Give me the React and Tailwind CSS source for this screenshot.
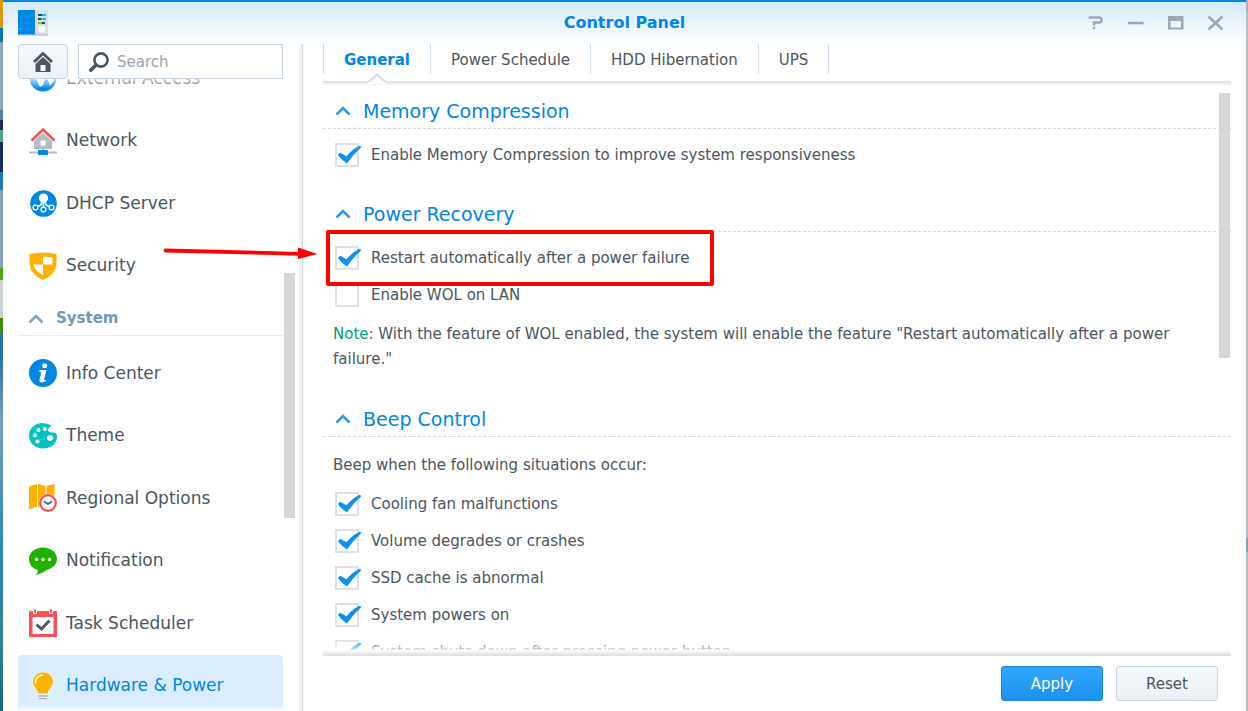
import React, { useState } from 'react';

const ExternalAccessIcon = () => (
  <svg viewBox="0 0 28 28" className="size-7">
    <circle cx="14" cy="14" r="13.500" fill="#0086e5" />
    <path d="M3 13 L8 16 L11 23 L14 21 L16 15 L19 16 L21 22 L25 16 L24 10 L15 8 L8 8 Z" fill="#fff" />
  </svg>
);

const NetworkIcon = () => (
  <svg viewBox="0 0 28 28" className="size-7">
    <path d="M5 14 L14 6 L23 14 V22 H5 Z" fill="#b3bec9" />
    <rect x="11.5" y="13.5" width="5" height="5" fill="#fff" />
    <path d="M2.5 13.5 L14 2.500 L25.5 13.5" fill="none" stroke="#fb5057" strokeWidth="2.6" />
    <path d="M0 25.5 H28 M14 22 V24" stroke="#b3bec9" strokeWidth="2" />
    <rect x="9" y="23" width="10" height="5" rx="1" fill="#0086e5" />
  </svg>
);

const DhcpIcon = () => (
  <svg viewBox="0 0 28 28" className="size-7">
    <circle cx="14.500" cy="14.500" r="13.300" fill="#0086e5" />
    <circle cx="14.500" cy="9" r="4.600" fill="#fff" />
    <path d="M14.500 12 V19 M13 12 L12 16 L7.500 18 M16 12 L17 16 L21.500 18" fill="none" stroke="#fff" strokeWidth="1.600" />
    <g fill="#0086e5" stroke="#fff" strokeWidth="1.400">
      <circle cx="6.500" cy="18.500" r="2.400" />
      <circle cx="14.500" cy="20.500" r="2.400" />
      <circle cx="22.500" cy="18.500" r="2.400" />
    </g>
  </svg>
);

const SecurityIcon = () => (
  <svg viewBox="0 0 28 28" className="size-7">
    <path d="M0.500 2 Q14 -1 27.500 2 V12 Q27 22 14 28 Q1 22 0.500 12 Z" fill="#ffb100" />
    <path d="M14 5 Q19 4.500 23.500 5.500 V12.500 H14 Z M4.500 12.500 H14 V23 Q5.500 19 4.500 12.500 Z" fill="#fff" />
  </svg>
);

const InfoIcon = () => (
  <svg viewBox="0 0 28 28" className="size-7">
    <circle cx="14" cy="14" r="14" fill="#0086e5" />
    <circle cx="15.700" cy="6.700" r="2.500" fill="#fff" />
    <path d="M10.500 11 H17.500 L15 20.500 Q15 21.500 17 20.500 L16.500 22.300 Q10 25.500 10.500 20.500 L12.300 13.200 L10.300 12.700 Z" fill="#fff" />
  </svg>
);

const ThemeIcon = () => (
  <svg viewBox="0 0 28 28" className="size-7">
    <path
      d="M22 3.500 Q18.500 1 13.500 1 C5.500 1 0 7 0 13.500 C0 21 6 26.500 14 26.500 C22.500 26.500 28 21 28 15 C28 11.500 26.500 10.500 24 10.500 C21 10.500 19 10 19 8 C19 6 21 6 22 3.500 Z"
      fill="#00c4c4"
    />
    <g fill="#fff">
      <circle cx="9.500" cy="8" r="2" />
      <circle cx="15.800" cy="7" r="2" />
      <circle cx="6" cy="13.300" r="2" />
      <circle cx="8.500" cy="19.500" r="2" />
      <ellipse cx="21" cy="16" rx="3.200" ry="2.700" />
    </g>
  </svg>
);

const RegionalIcon = () => (
  <svg viewBox="0 0 28 28" className="size-7">
    <path d="M0 2.500 L8 0 V22.500 L0 25.500 Z M9 0 L16.500 2 V25 L9 23 Z M17.500 2 L25.500 0 V16 H17.500 Z" fill="#ffb100" />
    <circle cx="19" cy="19" r="9.300" fill="#fff" />
    <circle cx="19" cy="19" r="7.800" fill="#fff" stroke="#fb5057" strokeWidth="2.200" />
    <path d="M15 17.500 L19 20 L23 17.500" fill="none" stroke="#4b5a68" strokeWidth="1.700" />
  </svg>
);

const NotificationIcon = () => (
  <svg viewBox="0 0 28 28" className="size-7">
    <path d="M14 0.500 C22 0.500 28 5.500 28 12 C28 18 23 21 18 23 C15 24.500 12 27 6.500 28 Q9 26 9 23 C3 21.500 0 17.500 0 12 C0 5.500 6 0.500 14 0.500 Z" fill="#1fb400" />
    <g fill="#fff">
      <circle cx="7.500" cy="12.500" r="1.700" />
      <circle cx="14" cy="12.500" r="1.700" />
      <circle cx="20.500" cy="12.500" r="1.700" />
    </g>
  </svg>
);

const TaskIcon = () => (
  <svg viewBox="0 0 28 28" className="size-7">
    <path d="M0 2 H4 V5 H8 V2 H20 V5 H24 V2 H28 V28 H0 Z" fill="#fb5057" />
    <path d="M5.200 0 H7 V4 H5.200 Z M21 0 H22.800 V4 H21 Z" fill="#fb5057" />
    <rect x="3.500" y="8" width="21" height="17" fill="#fff" />
    <path d="M7.500 15.500 L12.500 20 L20.500 11.500" fill="none" stroke="#4b5a68" strokeWidth="3" />
  </svg>
);

const PowerIcon = () => (
  <svg viewBox="0 0 28 28" className="size-7">
    <path d="M14 0 C20 0 24.500 4.500 24.500 10 C24.500 15 19.500 17 19 22 H9 C8.500 17 3.500 15 3.500 10 C3.500 4.500 8 0 14 0 Z" fill="#ffb100" stroke="#fff" strokeWidth="0.800" />
    <path d="M6.500 11 Q6.500 4 13.500 3" fill="none" stroke="#fff" strokeWidth="1.600" strokeLinecap="round" />
    <path d="M9 23 H19 V25 L17 28 H11 L9 25 Z" fill="#fff" />
    <path d="M9 24 H19 M10 26.500 H18" stroke="#a3b0bc" strokeWidth="1.300" />
  </svg>
);

const AppIcon = () => (
  <svg viewBox="0 0 30 26" className="h-[26px] w-[30px]">
    <rect x="16" y="0.500" width="14" height="24.500" fill="#d7dee5" />
    <path d="M0 25 H30" stroke="#a9b3bd" />
    <rect x="0" y="0" width="17" height="24.500" fill="#0086e5" />
    <path d="M2 7 H3 M5 7 H13 M2 13 H3 M5 13 H13 M5 19 H13" stroke="#12a4f0" strokeWidth="0.800" />
    <circle cx="2.500" cy="19" r="1.300" fill="#12b4f5" />
    <path d="M20 5 H24 M20 9 H27 M24 13 H27" stroke="#39434d" strokeWidth="2" />
    <path d="M24 5 H28 M23 9 H28" stroke="#18b8ef" strokeWidth="2" />
    <path d="M20 13 H24" stroke="#6fdc00" strokeWidth="2" />
    <circle cx="24" cy="19" r="3.500" fill="#fff" />
  </svg>
);

const Chevron = ({ className }) => (
  <svg viewBox="0 0 16 10" className={`h-[10px] w-4 ${className}`}>
    <path d="M1.500 8.500 L8 2 L14.500 8.500" fill="none" stroke="currentColor" strokeWidth="2.600" />
  </svg>
);

const connectivityItems = [
  { label: 'External Access', icon: ExternalAccessIcon },
  { label: 'Network', icon: NetworkIcon },
  { label: 'DHCP Server', icon: DhcpIcon },
  { label: 'Security', icon: SecurityIcon },
];

const systemItems = [
  { label: 'Info Center', icon: InfoIcon },
  { label: 'Theme', icon: ThemeIcon },
  { label: 'Regional Options', icon: RegionalIcon },
  { label: 'Notification', icon: NotificationIcon },
  { label: 'Task Scheduler', icon: TaskIcon },
  { label: 'Hardware & Power', icon: PowerIcon },
];

const tabs = ['General', 'Power Schedule', 'HDD Hibernation', 'UPS'];

const beepEvents = [
  'Cooling fan malfunctions',
  'Volume degrades or crashes',
  'SSD cache is abnormal',
  'System powers on',
  'System shuts down after pressing power button',
];

const NavItem = ({ item, active }) => {
  const Icon = item.icon;
  return (
    <li className="flex">
      <a
        href="#"
        className={`flex flex-1 items-center gap-[9px] rounded pl-[11px] text-[17px] ${
          active ? 'bg-[#d9edff] text-[#0086e5]' : 'text-[#4b5660]'
        }`}
      >
        <Icon />
        {item.label}
      </a>
    </li>
  );
};

const Sidebar = () => (
  <aside className="relative flex w-[300px] shrink-0 flex-col border-r border-[#d4d8dc] pr-[19px] pl-[15px] shadow-[inset_-3px_0_2px_-1px_#eeeeee]">
    <div className="flex h-[35px] shrink-0 gap-[10px]">
      <button
        aria-label="Home"
        className="flex w-[50px] items-center justify-center rounded border border-[#c8d3e0] bg-linear-to-b from-[#f5f9fd] to-[#ecf1f5]"
      >
        <svg viewBox="0 0 20 22" className="h-[22px] w-5">
          <path d="M1 11 L10 2.500 L19 11" fill="none" stroke="#4b5660" strokeWidth="2.800" />
          <path d="M2.500 13 L10 6 L17.500 13 V21 H2.500 Z" fill="#4b5660" />
          <rect x="7.500" y="14" width="5" height="6" fill="#f5f9fd" />
        </svg>
      </button>
      <label className="flex min-w-0 flex-1 items-center gap-2 border border-[#c8d3e0] bg-white pl-[10px]">
        <svg viewBox="0 0 20 20" className="size-5 shrink-0">
          <circle cx="12" cy="8" r="6.600" fill="none" stroke="#4b5660" strokeWidth="2.600" />
          <path d="M7 13 L1.800 18.200" stroke="#4b5660" strokeWidth="3.600" strokeLinecap="round" />
        </svg>
        <input
          type="text"
          aria-label="Search"
          placeholder="Search"
          className="min-w-0 flex-1 pt-[2px] text-[15px] outline-none placeholder:text-[#98a3ae]"
        />
      </label>
    </div>

    <nav className="relative min-h-0 flex-1 overflow-hidden">
      <ul className="-mt-8 grid h-[250px] grid-rows-4">
        {connectivityItems.map((item) => (
          <NavItem key={item.label} item={item} />
        ))}
      </ul>
      <button className="mb-[6px] flex h-[39px] w-full items-center gap-3 border-b border-[#e9ecef] pt-[5px] pl-[10px] text-[15px] font-bold text-[#7297b9]">
        <Chevron className="text-[#7fa3c2]" />
        System
      </button>
      <ul className="grid h-[375px] grid-rows-6">
        {systemItems.map((item) => (
          <NavItem key={item.label} item={item} active={item.label === 'Hardware & Power'} />
        ))}
      </ul>
      <div className="absolute inset-x-0 top-0 h-[10px] bg-linear-to-b from-white/70 to-white/0" />
      <div className="absolute inset-x-0 bottom-0 h-[6px] bg-linear-to-b from-white/0 to-white" />
    </nav>
    <div className="absolute top-[229px] right-[7px] h-[245px] w-[11px] bg-[#d5d6d8]" />
  </aside>
);

const Section = ({ title, children, className }) => (
  <section className={className}>
    <h2 className="border-b border-dashed border-[#ccdaea] text-[19px] leading-[34px] text-[#0086e5]">
      <button className="flex w-full items-center gap-3 pl-3">
        <Chevron className="text-[#2f9ae8]" />
        {title}
      </button>
    </h2>
    {children}
  </section>
);

const CheckRow = ({ label, defaultChecked = true }) => {
  const [checked, setChecked] = useState(defaultChecked);

  return (
    <label className="flex h-[37px] items-center gap-3 pl-3 text-[15px]">
      <span className="relative flex">
        <input
          type="checkbox"
          checked={checked}
          onChange={(e) => setChecked(e.target.checked)}
          className="size-6 appearance-none border-2 border-[#dae2e9] bg-white"
        />
        {checked && (
          <svg viewBox="0 0 28 24" className="pointer-events-none absolute top-0 left-0 h-6 w-7">
            <path d="M2.800 12 L5.200 9.800 L11.500 13.300 Q17 6.500 24.500 2.800 L26.500 4 Q18 11.500 12 20.500 Q7 17.500 2.800 12 Z" fill="#0f8fee" />
          </svg>
        )}
      </span>
      <span className="pt-[2px]">{label}</span>
    </label>
  );
};

const TitleBar = () => (
  <header className="relative flex h-[44px] shrink-0 items-center justify-center border-t-2 border-[#0086e5] bg-linear-to-b from-[#d3eafa] to-white">
    <div className="absolute top-2 left-[15px]">
      <AppIcon />
    </div>
    <h1 className="text-[16px] font-bold text-[#0086e5]">Control Panel</h1>
    <div className="absolute top-3 right-5 flex gap-5 text-[#9aa7b4]">
      <button aria-label="Help" className="size-5">
        <svg viewBox="0 0 20 20" className="size-5">
          <path d="M2.500 3.500 H13 Q15.500 3.500 15.500 6 Q15.500 8.500 13 8.500 H8 V11.500 M8 12.800 V15.300" fill="none" stroke="currentColor" strokeWidth="2.500" />
        </svg>
      </button>
      <button aria-label="Minimize" className="size-5">
        <svg viewBox="0 0 20 20" className="size-5">
          <path d="M2 9 H17.500" stroke="currentColor" strokeWidth="2.500" />
        </svg>
      </button>
      <button aria-label="Maximize" className="size-5">
        <svg viewBox="0 0 20 20" className="size-5">
          <path d="M2 2 H17.500 V15.500 H2 Z M4.500 7 V13.500 H15 V7 Z" fill="currentColor" fillRule="evenodd" />
        </svg>
      </button>
      <button aria-label="Close" className="size-5">
        <svg viewBox="0 0 20 20" className="size-5">
          <path d="M2.500 2.500 L16.500 15.500 M16.500 2.500 L2.500 15.500" stroke="currentColor" strokeWidth="2.600" />
        </svg>
      </button>
    </div>
  </header>
);

const TabBar = () => (
  <div className="relative h-[42px] shrink-0">
    <div className="absolute inset-x-0 top-[37px] h-[5px] bg-linear-to-b from-[#dcdcdc] to-white" />
    <div className="flex h-[30px]">
      {tabs.map((tab) => (
        <button
          key={tab}
          className={`relative border-l border-[#cfdcea] px-5 pt-[2px] text-[15px] last:border-r ${
            tab === 'General' ? 'font-bold text-[#0086e5]' : 'text-[#4b5660]'
          }`}
        >
          {tab}
          {tab === 'General' && (
            <svg viewBox="0 0 18 10" className="absolute top-[30px] left-1/2 h-[10px] w-[18px] -translate-x-1/2">
              <path d="M0 9 L9 0.500 L18 9 V10 H0 Z" fill="#fff" />
              <path d="M0.500 8 L9 0.800 L17.500 8" fill="none" stroke="#dadada" strokeWidth="2" />
            </svg>
          )}
        </button>
      ))}
    </div>
  </div>
);

// red markup drawn over the window
const Annotation = () => (
  <>
    <div className="pointer-events-none absolute top-[230px] left-[326px] h-[56px] w-[388px] rounded-xs border-4 border-[#ff0000]" />
    <svg viewBox="0 0 156 16" className="pointer-events-none absolute top-[245px] left-[162px] h-4 w-[156px]">
      <path d="M3.500 5.500 L138 8.800" stroke="#ff0000" strokeWidth="3.800" strokeLinecap="round" />
      <path d="M136 2.500 L155.500 9 L136 14 Z" fill="#ff0000" />
    </svg>
  </>
);

const App = () => {
  return (
    <div
      className="relative flex h-screen overflow-hidden text-[#4b5660]"
      style={{ fontFamily: 'Verdana, "DejaVu Sans", sans-serif' }}
    >
      {/* Desktop showing at the window's left edge */}
      <div className="w-[3px] shrink-0 bg-[linear-gradient(#d99a10_0_28px,#1573b5_28px_42px,#8aa7c2_42px_110px,#4a7fae_110px_120px,#1c2c55_120px_130px,#51ab88_130px_142px,#162a5c_142px_172px,#2478b5_172px_190px,#87a3bb_190px_268px,#4caa0e_268px_280px,#cbd3d0_280px_318px,#3f8c0c_318px_334px,#2c6fa8_334px_358px,#7aa0c2_420px,#4d8fb5_500px,#2b86a8_560px,#3a7f9c_640px,#16647e)]" />

      <div className="flex min-w-0 flex-1 flex-col bg-white">
        <TitleBar />
        <div className="flex min-h-0 flex-1">
          <Sidebar />
          <main className="relative flex min-w-0 flex-1 flex-col pr-[15px] pl-5">
            <TabBar />
            <div className="relative min-h-0 flex-1 overflow-hidden pt-2">
              <Section title="Memory Compression">
                <div className="pt-[7px]">
                  <CheckRow label="Enable Memory Compression to improve system responsiveness" />
                </div>
              </Section>
              <Section title="Power Recovery" className="mt-6">
                <div className="pt-[7px]">
                  <CheckRow label="Restart automatically after a power failure" />
                  <CheckRow label="Enable WOL on LAN" defaultChecked={false} />
                </div>
                <p className="mt-[9px] pr-5 pl-[10px] text-[15px] leading-[25px]">
                  <span className="text-[#00a070]">Note:</span> With the feature of WOL enabled, the system will enable the
                  feature "Restart automatically after a power failure."
                </p>
              </Section>
              <Section title="Beep Control" className="mt-[30px]">
                <p className="mt-4 mb-[7px] pl-[10px] text-[15px] leading-[25px]">Beep when the following situations occur:</p>
                {beepEvents.map((event) => (
                  <CheckRow key={event} label={event} />
                ))}
              </Section>
              <div className="absolute top-[7px] right-[1px] h-[265px] w-[11px] bg-[#d5d6d8]" />
              <div className="absolute inset-x-0 bottom-0 h-[10px] bg-linear-to-b from-white/0 to-white/80" />
            </div>
            <footer className="relative flex h-[61px] shrink-0 items-center justify-end gap-[13px] pt-[6px] pr-[13px]">
              <div className="absolute inset-x-0 top-0 h-[6px] bg-linear-to-b from-white to-[#dcdcdc]" />
              <button className="h-[35px] w-[102px] rounded-[3px] border border-[#1a86d8] bg-linear-to-b from-[#30a6ff] to-[#1a92ec] pt-[2px] text-[15px] text-white">
                Apply
              </button>
              <button className="h-[35px] w-[102px] rounded-[3px] border border-[#c8d3e0] bg-linear-to-b from-[#f5f9fd] to-[#ebeff4] pt-[2px] text-[15px]">
                Reset
              </button>
            </footer>
          </main>
        </div>
      </div>

      <div className="w-[2px] shrink-0 bg-[linear-gradient(#a7b0b7_0_10px,#b9bfc4_12px_538px,#82a4b3_538px_552px,#b9bfc4_552px)]" />
      <Annotation />
    </div>
  );
};

export default App;
